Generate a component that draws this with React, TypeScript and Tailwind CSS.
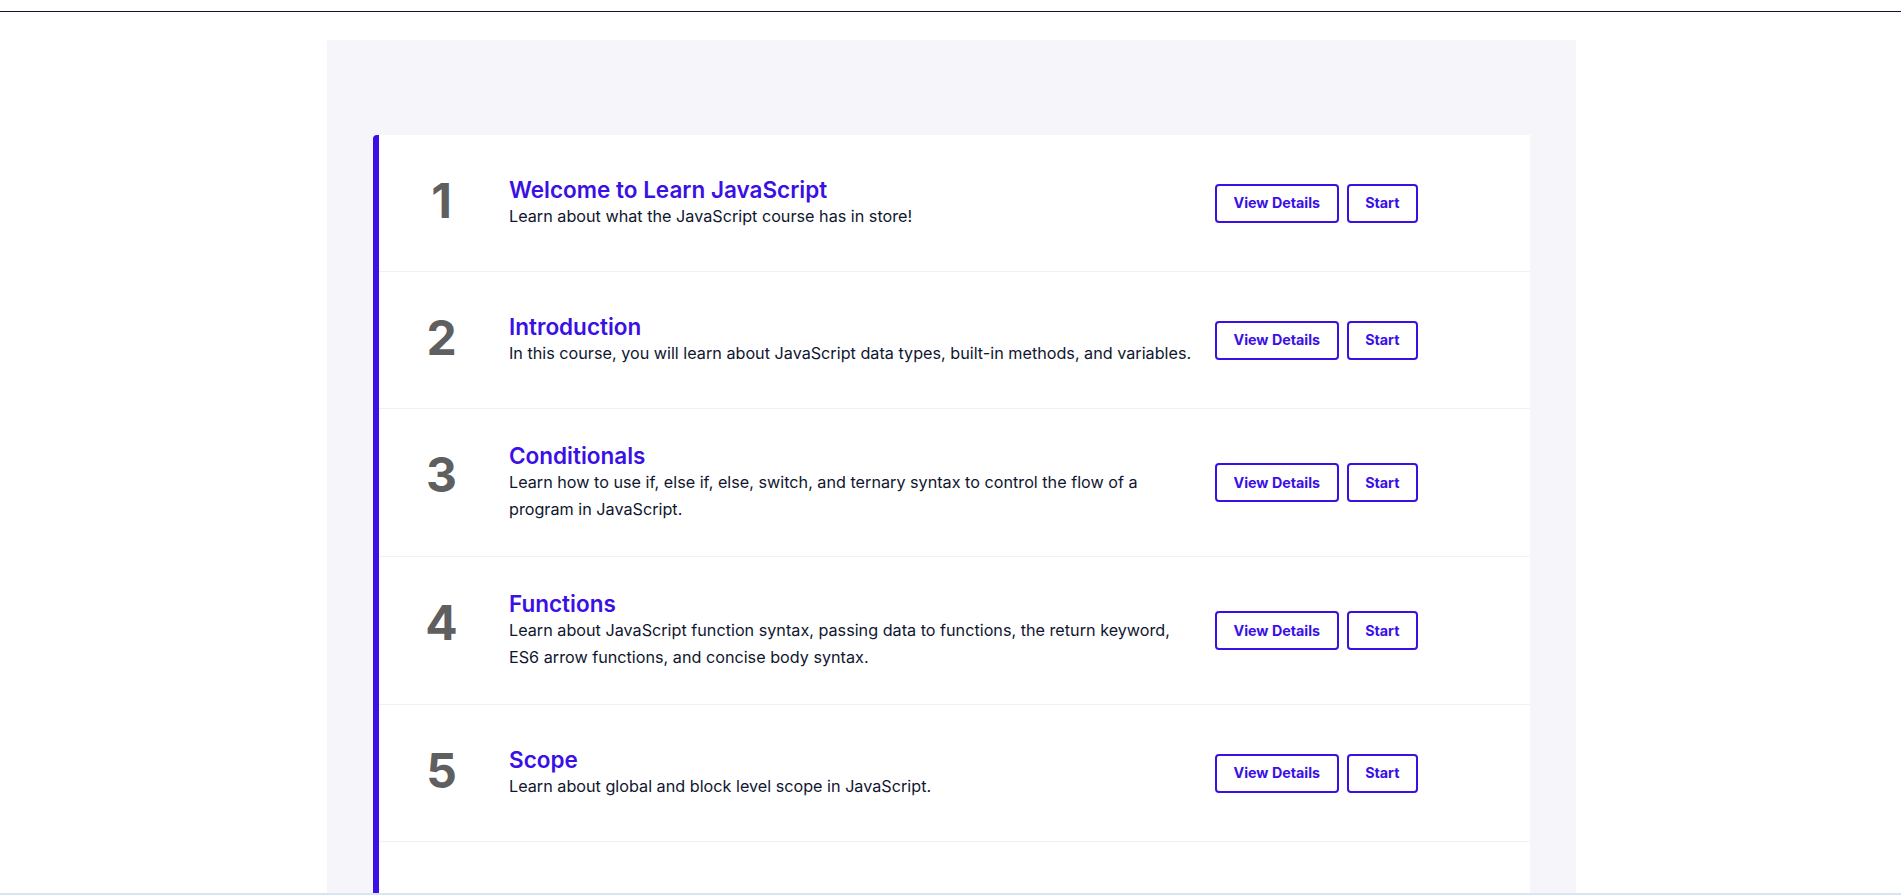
const lessons = [
  {
    n: 1,
    title: 'Welcome to Learn JavaScript',
    text: 'Learn about what the JavaScript course has in store!',
  },
  {
    n: 2,
    title: 'Introduction',
    text: 'In this course, you will learn about JavaScript data types, built-in methods, and variables.',
  },
  {
    n: 3,
    title: 'Conditionals',
    text: 'Learn how to use if, else if, else, switch, and ternary syntax to control the flow of a program in JavaScript.',
  },
  {
    n: 4,
    title: 'Functions',
    text: 'Learn about JavaScript function syntax, passing data to functions, the return keyword, ES6 arrow functions, and concise body syntax.',
  },
  {
    n: 5,
    title: 'Scope',
    text: 'Learn about global and block level scope in JavaScript.',
  },
];

function OutlineButton({ label }: { label: string }) {
  return (
    <button className="h-[39px] px-[16.5px] border-2 border-[#3a10e5] rounded-[4px] text-[14.3px] font-bold text-[#3a10e5] bg-white">
      {label}
    </button>
  );
}

export default function App() {
  return (
    <div className="min-h-screen bg-white font-['Inter',sans-serif]">
      <div className="h-[11px]" />
      <div className="h-px bg-[#10162f]" />
      <div className="pt-[28px] flex justify-center">
        <div className="w-[1249px] bg-[#f5f5fa] px-[46px] pt-[95px] ml-[2px]">
          <div className="bg-white rounded-tl-[4px] border-l-[6px] border-[#3a10e5] pb-[120px]">
            {lessons.map((l) => (
              <div key={l.n} className="flex border-b border-[#f2f2f4] py-[33px]">
                <div className="w-[125px] shrink-0 self-start text-center pt-[6px] pb-[10px] text-[48px] leading-[54px] font-bold text-[#5f5f5f]">
                  {l.n}
                </div>
                <div className="self-center ml-[5px] w-[687px] shrink-0">
                  <h3 className="text-[22.5px] leading-[27px] font-semibold text-[#3a10e5]">{l.title}</h3>
                  <p className="text-[16.2px] leading-[27px] text-[#10162f]">{l.text}</p>
                </div>
                <div className="self-center ml-[19px] flex gap-[8px]">
                  <OutlineButton label="View Details" />
                  <OutlineButton label="Start" />
                </div>
              </div>
            ))}
          </div>
        </div>
      </div>
      <div className="fixed bottom-0 left-0 right-0 h-[2px] bg-[#dbe5f1]" />
    </div>
  );
}
